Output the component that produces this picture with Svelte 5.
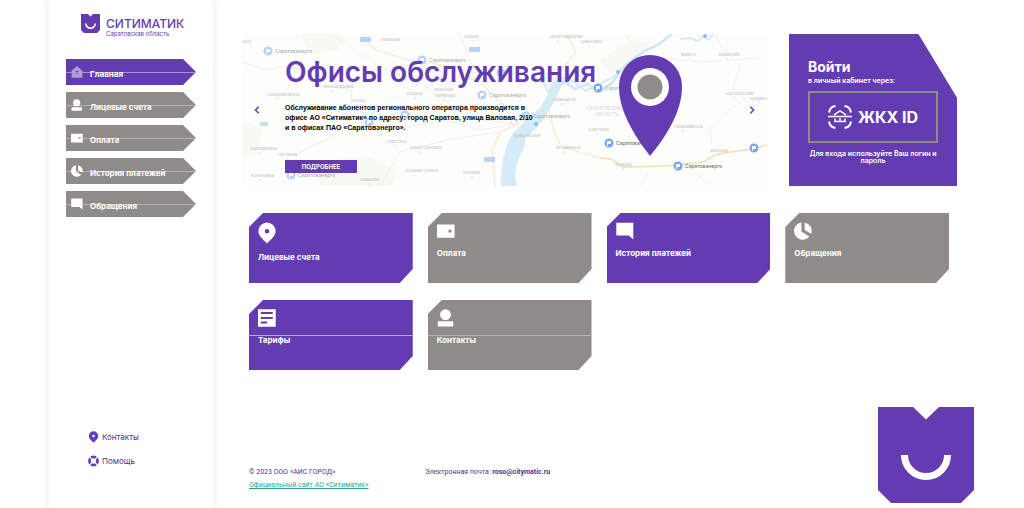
<script>
  const nav = [
    { label: 'Главная', icon: 'home', active: true },
    { label: 'Лицевые счета', icon: 'user' },
    { label: 'Оплата', icon: 'wallet' },
    { label: 'История платежей', icon: 'pie' },
    { label: 'Обращения', icon: 'chat' },
  ];

  const tiles = [
    { label: 'Лицевые счета', icon: 'pin', purple: true },
    { label: 'Оплата', icon: 'wallet' },
    { label: 'История платежей', icon: 'chat', purple: true },
    { label: 'Обращения', icon: 'pie' },
    { label: 'Тарифы', icon: 'list', purple: true, ruled: true },
    { label: 'Контакты', icon: 'user', ruled: true },
  ];

  // Office markers: position on the map and whether the office name is shown
  const offices = [
    [268, 51, true], [291, 175, true], [422, 60, true], [482, 95, true],
    [526, 116, true], [598, 88, true], [609, 143, true], [678, 166, true],
    [754, 148, false], [501, 73, false], [405, 115, false], [369, 122, false],
  ];

  const towns = [
    [381, 41, 'Покровка'], [464, 38, 'Озерки'], [549, 38, 'Сухой Карабулак'],
    [580, 43, 'Симоновка'], [242, 43, 'урск'], [323, 88, 'Александровка'],
    [268, 96, 'Екатериновское'], [352, 102, 'Аткуль'], [434, 91, 'Ивановка'],
    [434, 97, 'Полчаново'], [250, 150, 'Екатериновка'], [278, 156, 'Песчанка'],
    [386, 143, 'Советское'], [410, 149, 'Новая Скатовка'], [251, 177, 'Кологривка'],
    [360, 181, 'Камышки'], [405, 172, 'Большая Поляна'],
    [463, 174, 'Поповка'], [513, 137, 'Приволжский'], [556, 149, 'Безымянное'],
    [553, 101, 'Шумный Яр'], [588, 131, 'Советское'], [614, 166, 'Пушкино'],
    [681, 56, 'Маянга'], [718, 56, 'Коринский'], [725, 95, 'Новосельский'],
    [750, 100, 'Кушумск'], [674, 128, 'Первомайское'], [710, 152, 'Милорад'],
    [406, 95, 'Озерное'],
  ];
</script>

{#snippet icon(name)}
  <svg class="icon" viewBox="0 0 18 18" aria-hidden="true">
    {#if name === 'home'}
      <path fill="currentColor" fill-rule="evenodd" d="M9 0 17 7V17.5H1V7ZM9 7.2A2.3 2.3 0 1 0 9 11.8 2.3 2.3 0 0 0 9 7.2Z" />
    {:else if name === 'user'}
      <circle cx="8.5" cy="5.6" r="5.4" fill="currentColor" />
      <path fill="currentColor" d="M.8 12.2H16.2V17.6H.8Z" />
    {:else if name === 'wallet'}
      <path fill="currentColor" fill-rule="evenodd" d="M0 2.5H17.6V15.8H0ZM13 7.4A1.7 1.7 0 1 0 13 10.8 1.7 1.7 0 0 0 13 7.4Z" />
    {:else if name === 'pie'}
      <path fill="currentColor" d="M7.4 .4V9.6L15.4 14.6A8.7 8.7 0 1 1 7.4 .4Z" />
      <path fill="currentColor" d="M10.6 .4A8.7 8.7 0 0 1 17.2 11.8L10.6 8Z" />
    {:else if name === 'chat'}
      <path fill="currentColor" d="M.3 .8H17.3V17.6L12.8 13.6H.3Z" />
    {:else if name === 'list'}
      <path fill="currentColor" fill-rule="evenodd" d="M0 .3H17.7V17.7H0ZM2.8 3V5H14.8V3ZM2.8 8V10H14.8V8ZM2.8 12.6V14.6H9.2V12.6Z" />
    {/if}
  </svg>
{/snippet}

{#snippet pin()}
  <svg class="icon pin" viewBox="0 0 18 22" aria-hidden="true">
    <path fill="currentColor" fill-rule="evenodd" d="M9 .5A8.6 8.6 0 0 0 .4 9.1C.4 13.6 4.4 17 9 21.4 13.6 17 17.6 13.6 17.6 9.1A8.6 8.6 0 0 0 9 .5ZM9 7A2.3 2.3 0 1 1 9 11.6 2.3 2.3 0 0 1 9 7Z" />
  </svg>
{/snippet}

<div class="page">
  <aside>
    <a class="logo" href="#home">
      <svg viewBox="0 0 19 19" aria-hidden="true">
        <path fill="#643cb1" d="M0 0H7L9.5 2.4 12 0H19V16L16 19H3L0 16Z" />
        <path fill="none" stroke="#fff" stroke-width="1.6" d="M4.9 9.6A4.6 4.6 0 0 0 14.1 9.6" />
      </svg>
      <span class="brand"><b>СИТИМАТИК</b><small>Саратовская область</small></span>
    </a>
    <nav class="menu">
      {#each nav as item}
        <a href="#menu" class:active={item.active}>{@render icon(item.icon)}<span>{item.label}</span></a>
      {/each}
    </nav>
    <nav class="extra">
      <a href="#contacts">{@render pin()}Контакты</a>
      <a href="#help">
        <svg class="icon" viewBox="0 0 12 12" aria-hidden="true">
          <circle cx="6" cy="6" r="4.4" fill="none" stroke="#643cb1" stroke-width="3" />
          <path stroke="#fff" stroke-width="1.3" d="M1 1 4 4M8 8 11 11M11 1 8 4M4 8 1 11" />
        </svg>Помощь</a>
    </nav>
  </aside>

  <div class="content">
    <main>
      <div class="top">
        <section class="banner">
          <svg class="map" viewBox="242 34 525 152" preserveAspectRatio="xMidYMid slice" aria-hidden="true">
            <rect x="242" y="34" width="525" height="152" fill="#fdfdfb" />
            <g fill="#f6faf2">
              <path d="M242 120 262 128 258 150 242 158ZM300 34 345 34 338 50 312 55ZM312 163 365 156 398 170 392 186H320Z" />
              <path d="M600 60 632 40 650 42 628 66 610 74ZM540 84 555 68 566 78 553 98Z" />
            </g>
            <g fill="none" stroke="#f0efed" stroke-width="1">
              <path d="M242 62 265 70 290 66 330 80 352 92 350 120 330 138 300 152 282 186M330 34 362 54 378 66 420 82 470 118 515 124M350 108 400 128 446 120 480 130 515 124M380 186 400 152 446 140 500 132M460 34 470 62 506 108" />
              <path d="M715 34 722 48 740 66 733 88 748 104M625 34 640 56 700 62 760 58M712 145 710 128 725 114 745 98M640 186 648 172M690 165 708 186" />
            </g>
            <g fill="none" stroke="#f8e8ca" stroke-width="1.2">
              <path d="M362 34 375 50 410 60 450 66 482 84 506 108 512 124M495 186 492 150 500 133 520 122 548 104 553 128 560 145 582 153 600 158" />
              <path d="M566 34 576 52 560 72 548 92" />
            </g>
            <path fill="none" stroke="#f8dcae" stroke-width="1.4" d="M600 158 611 159 623 167 667 166 703 162 717 154 745 150 767 145" />
            <path fill="#d5ebf8" d="M501 186C501 170 503 158 506 148 509 139 512 134 517 130 521 124 528 117 534 114 541 109 544 101 547 96L552 82 559 78 568 81 561 87 556 98C552 105 549 111 544 119 536 128 531 134 525 138 527 147 520 153 518 162 515 170 514 176 517 186Z" />
            <g fill="none" stroke="#cfe7f7">
              <path stroke-width="2.5" d="M564 81 575 89 588 84 599 92 612 83 620 71 632 60 646 50 658 45 672 34" />
              <path stroke-width="1.5" d="M561 77 574 82 586 91 600 84 615 76 626 64 640 54M680 39 690 38 698 41 704 36 709 40 713 34M535 77 544 84 549 93" />
            </g>
            <g fill="#8fb9f5"><circle cx="536" cy="124" r="2" /><circle cx="618" cy="72" r="2" /><circle cx="705" cy="36" r="2" /></g>
            <g fill="#b9d3f8"><rect x="360" y="37" width="11" height="5" /><rect x="469" y="47" width="11" height="5" /><rect x="484" y="157" width="11" height="5" /></g>
            <rect x="260" y="122" width="8" height="4" fill="#c3e3d6" />
            {#each towns as [x, y, name]}
              <text class="town" {x} {y}>{name}</text>
              <circle cx={x + 9} cy={y + 3} r="0.7" fill="#d0d0d0" />
            {/each}
            <text class="region" x="586" y="110">САРАТОВСКАЯ</text>
            <text class="region" x="595" y="116">ОБЛАСТЬ</text>
            {#each offices as [x, y, named]}
              <circle cx={x} cy={y} r="4.5" fill={x > 590 ? '#7aa7f3' : '#b7d1f8'} />
              <path fill="#fff" d="M{x - 2} {y - 2}h4v3h-3v2h-1z" />
              {#if named}<text class={x > 600 ? 'office near' : 'office'} x={x + 7} y={y + 2}>Саратовэнерго</text>{/if}
            {/each}
            <path fill="#643cb1" d="M650 55C632 55 619 69 619 87 619 110 633 134 650 156 668 134 682 110 682 87 682 69 668 55 650 55Z" />
            <circle cx="650" cy="87" r="19" fill="#fff" />
            <circle cx="650" cy="87" r="12.5" fill="#8f8b89" />
          </svg>
          <button class="arrow" aria-label="Назад"><svg viewBox="0 0 6 8"><path d="M4.7 .8 1.4 4 4.7 7.2" /></svg></button>
          <div class="slide">
            <h1>Офисы обслуживания</h1>
            <p>Обслуживание абонентов регионального оператора производится в<br />офисе АО «Ситиматик» по адресу: город Саратов, улица Валовая, 2/10<br />и в офисах ПАО «Саратовэнерго».</p>
            <a class="more" href="#offices">ПОДРОБНЕЕ</a>
          </div>
          <button class="arrow" aria-label="Вперёд"><svg viewBox="0 0 6 8"><path d="M1.3 .8 4.6 4 1.3 7.2" /></svg></button>
        </section>

        <section class="login">
          <h2>Войти</h2>
          <p>в личный кабинет через:</p>
          <button class="gkh">
            <svg viewBox="0 0 24 24" aria-hidden="true" fill="none" stroke="#fff" stroke-width="2">
              <path d="M1 7.5C1.500 4 4 1.500 7.500 1M16.500 1C20 1.500 22.500 4 23 7.500M23 16.500C22.500 20 20 22.500 16.500 23M7.500 23C4 22.500 1.500 20 1 16.500" />
              <path stroke-width="1.500" d="M0 11.500H24M6 9.800 12 5.800 18 9.800M7 13.500V16.500H17V13.500M12 13V16.500" />
            </svg>
            ЖКХ ID
          </button>
          <p class="hint">Для входа используйте Ваш логин и пароль</p>
        </section>
      </div>

      <div class="tiles">
        {#each tiles as tile}
          <a href="#section" class="tile" class:purple={tile.purple} class:ruled={tile.ruled}>
            {#if tile.icon === 'pin'}{@render pin()}{:else}{@render icon(tile.icon)}{/if}
            <span>{tile.label}</span>
          </a>
        {/each}
      </div>
    </main>

    <footer>
      <div class="legal">
        <span>© 2023 ООО «АИС ГОРОД»</span>
        <a href="#site">Официальный сайт АО «Ситиматик»</a>
      </div>
      <div class="mail">Электронная почта: <b>roso@citymatic.ru</b></div>
      <svg class="mark" viewBox="0 0 96 96" aria-hidden="true">
        <path fill="#643cb1" d="M0 0H35L48 12.500 61 0H96V83L83 96H13L0 83Z" />
        <path fill="none" stroke="#fff" stroke-width="7" d="M26.500 48A21.500 21.500 0 0 0 69.500 48" />
      </svg>
    </footer>
  </div>
</div>

<style>
  :global(body) { margin: 0; background: #fff; }
  * { box-sizing: border-box; }
  h1, h2, p { margin: 0; }
  a { color: inherit; text-decoration: none; }
  button { padding: 0; border: 0; background: none; color: inherit; font: inherit; cursor: pointer; }
  .icon { display: block; flex: none; }

  .page { display: flex; min-height: 100vh; padding-left: 49px; font-family: Inter, "Noto Sans", sans-serif; font-size: 8px; }

  aside { display: flex; flex-direction: column; flex: none; width: 164px; padding: 14px 17px 41px; background: #fff; box-shadow: 0 0 10px rgba(0, 0, 0, 0.1); }
  .logo { display: flex; gap: 6px; margin: 0 0 23px 15px; color: #643cb1; }
  .logo svg { flex: none; width: 19px; height: 19px; }
  .brand { display: flex; flex-direction: column; height: 22px; padding-top: 3px; white-space: nowrap; }
  .brand b { font-size: 12px; line-height: 13px; font-weight: 500; }
  .brand small { font-size: 6px; line-height: 8px; font-weight: 400; }

  .menu { display: flex; flex-direction: column; gap: 7px; }
  .menu a { display: flex; align-items: center; gap: 7px; height: 26px; padding: 0 0 0 5px; color: #fff; font-weight: 700; background: linear-gradient(#b4b1af, #b4b1af) 0 13px / 100% 1px no-repeat #8f8b89; clip-path: polygon(0 0, 90% 0, 100% 50%, 90% 100%, 0 100%); }
  .menu a.active { background-color: #643cb1; background-image: linear-gradient(#a891d4, #a891d4); }
  .menu span { padding-top: 3px; }
  .menu .icon { width: 12px; height: 12px; }
  .menu .active .icon { color: #b09bd9; }

  .extra { display: flex; flex-direction: column; gap: 12px; margin-top: auto; padding-left: 22px; }
  .extra a { display: flex; align-items: center; gap: 3px; color: #4d3689; line-height: 12px; }
  .extra .icon { width: 11px; height: 12px; color: #643cb1; }

  .content { display: flex; flex: 1; flex-direction: column; min-width: 0; }
  main { padding: 34px 67px 0 29px; }
  .top { display: flex; gap: 22px; }

  .banner { position: relative; display: flex; align-items: center; flex: 1; min-width: 0; min-height: 152px; padding: 0 12px; overflow: hidden; }
  .map { position: absolute; inset: 0; width: 100%; height: 100%; }
  .town { font-size: 4px; fill: #bdbdbd; }
  .region { font-size: 5px; fill: #dcd5e2; }
  .office { font-size: 5px; fill: #aaa; }
  .office.near { fill: #666; }
  .arrow { position: relative; flex: none; width: 6px; height: 8px; }
  .arrow svg { display: block; fill: none; stroke: #643cb1; stroke-width: 1.5; }
  .slide { position: relative; flex: 1; min-width: 0; padding: 7px 0 0 25px; white-space: nowrap; }
  h1 { color: #643cb1; font-size: 28px; line-height: 36px; font-weight: 600; }
  .slide p { margin: 13px 0 27px; color: #000; font: bold 7px/10px "Liberation Sans", Arial, sans-serif; }
  .more { display: block; width: 72px; color: #fff; background: #643cb1; font-size: 6px; line-height: 13px; font-weight: 700; text-align: center; }

  .login { flex: none; width: 168px; padding: 24px 19px 0; color: #fff; background: #643cb1; clip-path: polygon(0 0, 77% 0, 100% 42%, 100% 100%, 0 100%); }
  h2 { font-size: 14px; line-height: 18px; font-weight: 700; }
  .login p { line-height: 10px; font-size: 7px; font-weight: 600; }
  .gkh { display: flex; align-items: center; justify-content: center; gap: 6px; width: 100%; height: 52px; margin: 5px 0 7px; border: 2px solid #8f8b89; font-size: 16px; font-weight: 700; white-space: nowrap; }
  .gkh svg { width: 24px; height: 24px; }
  .login .hint { line-height: 7px; text-align: center; }

  .tiles { display: grid; grid-template-columns: repeat(4, 1fr); gap: 17px 15px; margin: 27px 8px 0 7px; }
  .tile { display: flex; flex-direction: column; gap: 6px; min-height: 70px; padding: 9px 9px 0; color: #fff; background: #8f8b89; font-weight: 700; line-height: 14px; clip-path: polygon(14px 0, 100% 0, 100% 56px, calc(100% - 13px) 100%, 0 100%, 0 14px); }
  .tile.purple { background: #643cb1; }
  .tile.ruled { background-image: linear-gradient(#b9aad6, #b9aad6); background-size: 100% 1px; background-position: 0 35px; background-repeat: no-repeat; }
  .tile .icon { width: 18px; height: 18px; }
  .tile .pin { height: 22px; }

  footer { display: flex; align-items: flex-end; margin-top: auto; padding: 0 50px 5px 36px; color: #4d3689; font-family: Roboto, "Noto Sans", sans-serif; font-size: 7px; line-height: 13px; }
  .legal { display: flex; flex-direction: column; width: 176px; padding-bottom: 11px; }
  .legal a { color: #2aa78b; text-decoration: underline; }
  .mail { padding-bottom: 24px; }
  .mark { width: 96px; height: 96px; margin-left: auto; }
</style>
